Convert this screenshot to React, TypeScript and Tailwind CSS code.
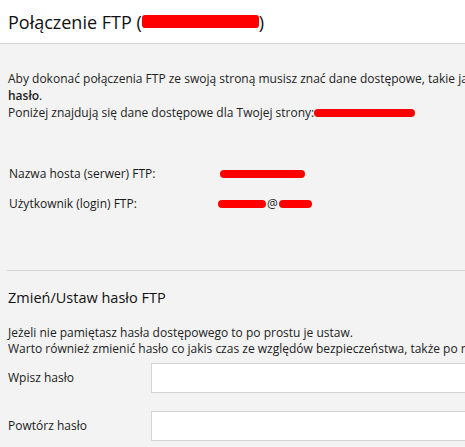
import React from 'react';

// Redaction stroke drawn over hidden values in the screenshot.
function Scribble({ className, round = 'rounded-full' }: { className: string; round?: string }) {
  return <span className={`inline-block bg-[#ff0000] blur-[0.6px] align-middle ${round} ${className}`} />;
}

function InfoRow({ label, children }: { label: string; children: React.ReactNode }) {
  return (
    <div className="flex h-[30px] items-center">
      <div className="w-[211px] shrink-0 text-[12px] font-medium text-[#1a1a1a]">{label}</div>
      <div className="flex items-center text-[12px] text-[#222]">{children}</div>
    </div>
  );
}

function PasswordRow({ label }: { label: string }) {
  return (
    <div className="flex items-center">
      <label className="w-[143px] shrink-0 text-[12px] font-medium text-[#1a1a1a]">{label}</label>
      <input type="password" className="h-[30px] w-[330px] border border-[#d4d4d4] bg-white outline-none" />
    </div>
  );
}

export default function App() {
  return (
    <div className="h-[447px] w-[465px] overflow-hidden bg-[#f3f3f3] font-['Open_Sans',sans-serif]">
      <div className="w-[600px]">
        <header className="flex h-[44px] items-center border-b border-[#d5d5d5] bg-white pl-[8px]">
          <h1 className="flex items-center text-[18px] leading-none text-[#111]">
            Połączenie FTP (
            <Scribble round="rounded-[3px]" className="h-[13px] w-[117px]" />
            )
          </h1>
        </header>

        <section className="px-[8px] pt-[26px] text-[12px] leading-[17px] text-[#222]">
          <p className="whitespace-nowrap">
            Aby dokonać połączenia FTP ze swoją stroną musisz znać dane dostępowe, takie jak <b className="font-semibold">login</b> i
          </p>
          <p>
            <b className="font-semibold">hasło</b>.
          </p>
          <p className="flex items-center whitespace-nowrap">
            Poniżej znajdują się dane dostępowe dla Twojej strony:
            <Scribble className="h-[8px] w-[101px]" />
          </p>
        </section>

        <section className="pl-[9px] pt-[38px]">
          <InfoRow label="Nazwa hosta (serwer) FTP:">
            <Scribble className="h-[8px] w-[85px]" />
          </InfoRow>
          <InfoRow label="Użytkownik (login) FTP:">
            <Scribble className="-ml-[2px] h-[8px] w-[48px]" />
            <span className="ml-[1px]">@</span>
            <Scribble className="ml-[1px] h-[8px] w-[33px]" />
          </InfoRow>
        </section>

        <div className="ml-[7px] mt-[51px] border-t border-[#d5d5d5]" />

        <section className="px-[8px] pt-[17px]">
          <h2 className="text-[14.5px] leading-[20px] text-[#111]">Zmień/Ustaw hasło FTP</h2>
          <p className="mt-[17px] whitespace-nowrap text-[12px] leading-[16px] text-[#222]">
            Jeżeli nie pamiętasz hasła dostępowego to po prostu je ustaw.
          </p>
          <p className="whitespace-nowrap text-[12px] leading-[16px] text-[#222]">
            Warto również zmienić hasło co jakis czas ze względów bezpieczeństwa, także po nadaniu go komuś.
          </p>
          <div className="mt-[6px] flex flex-col gap-[18px]">
            <PasswordRow label="Wpisz hasło" />
            <PasswordRow label="Powtórz hasło" />
          </div>
        </section>
      </div>
    </div>
  );
}
